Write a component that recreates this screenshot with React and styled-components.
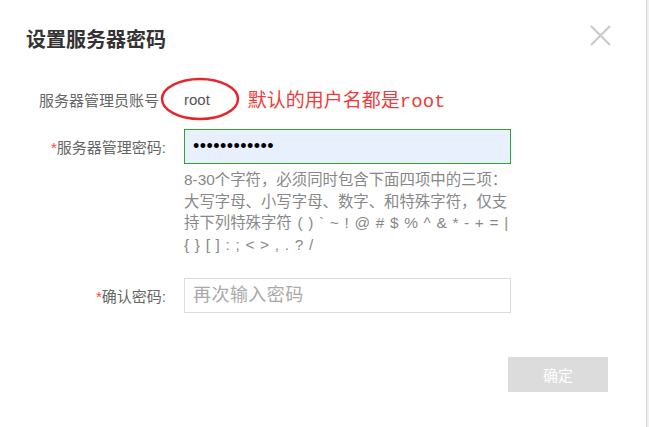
import React from 'react';
import styled, { createGlobalStyle } from 'styled-components';

const GlobalStyle = createGlobalStyle`
    html, body {
        margin: 0;
        padding: 0;
        background: #fff;
    }
    body {
        font-family: "Liberation Sans", "Noto Sans CJK SC", sans-serif;
    }
`

const Page = styled.div`
    display: flex;
    width: 649px;
    height: 427px;
    overflow: hidden;
`

const Dialog = styled.div`
    width: 646px;
    box-sizing: border-box;
    padding: 30px 38px 0 0;
    background: #fff;
`

const EdgeStrip = styled.div`
    width: 2px;
    border-left: 1px solid #d6d6d6;
    background: #f1f1f1;
`

const Header = styled.div`
    display: flex;
    justify-content: space-between;
    align-items: flex-start;
    padding-left: 26px;
    margin-right: -3px;
    margin-bottom: 29px;
`

const Title = styled.h2`
    margin: 0;
    font-size: 20px;
    line-height: 20px;
    font-weight: bold;
    color: #333;
`

const CloseButton = styled.button`
    margin-top: -5px;
    width: 21px;
    height: 21px;
    padding: 0;
    border: none;
    background: none;
    cursor: pointer;
    svg {
        display: block;
    }
`

const Row = styled.div`
    display: grid;
    grid-template-columns: 166px 327px;
    column-gap: 18px;
    align-items: center;
    margin-top: ${p => p.$mt || 0}px;
    min-height: ${p => p.$h || 35}px;
`

const Label = styled.label`
    text-align: right;
    font-size: 15px;
    color: #666;
    white-space: nowrap;
    padding-right: ${p => p.$pr || 0}px;
`

const Star = styled.span`
    color: #f44;
`

const Value = styled.div`
    position: relative;
    display: flex;
    align-items: center;
    height: 100%;
    font-size: 15px;
    color: #555;
`

const Circle = styled.svg`
    position: absolute;
    left: -24px;
    top: 50%;
    transform: translateY(-50%);
`

const Note = styled.span`
    margin-left: 38px;
    font-family: "Liberation Mono", "Noto Sans CJK SC", monospace;
    font-size: 19px;
    color: #ee3b3b;
    white-space: nowrap;
`

const Input = styled.input`
    box-sizing: border-box;
    width: 327px;
    height: 35px;
    margin: 0;
    padding: 0 8px;
    outline: none;
    font-family: "Liberation Sans", "Noto Sans CJK SC", sans-serif;
    font-size: 15px;
    color: #333;
    border: 1px solid ${p => p.$ok ? '#2ea52e' : '#dcdcdc'};
    background: ${p => p.$ok ? '#e8f0fe' : '#fff'};
    &[type="password"] {
        font-size: 18px;
        letter-spacing: 0.45px;
        color: #000;
    }
    &::placeholder {
        color: #aaa;
    }
`

const Hint = styled.div`
    grid-column: 2;
    font-size: 15.4px;
    line-height: 21.5px;
    color: #888;
    word-spacing: 1.4px;
    white-space: nowrap;
`

const Footer = styled.div`
    display: flex;
    justify-content: flex-end;
    margin-top: 44px;
`

const SubmitButton = styled.button`
    width: 100px;
    height: 35px;
    border: none;
    background: #dcdcdc;
    color: #fff;
    font-family: "Liberation Sans", "Noto Sans CJK SC", sans-serif;
    font-size: 15px;
    cursor: default;
`

export default function App() {
    return (
        <Page>
            <GlobalStyle />
            <Dialog>
                <Header>
                    <Title>设置服务器密码</Title>
                    <CloseButton aria-label="关闭">
                        <svg width="21" height="21" viewBox="0 0 21 21">
                            <path d="M1 1 L20 20 M20 1 L1 20" stroke="#c9c9c9" strokeWidth="2" fill="none" />
                        </svg>
                    </CloseButton>
                </Header>

                <Row $h={40}>
                    <Label $pr={7}>服务器管理员账号</Label>
                    <Value>
                        <Circle width="80" height="44" viewBox="0 0 80 44">
                            <ellipse cx="40" cy="22" rx="38" ry="20" fill="none" stroke="#e8262a" strokeWidth="2.5" />
                        </Circle>
                        <span>root</span>
                        <Note>默认的用户名都是root</Note>
                    </Value>
                </Row>

                <Row $mt={10}>
                    <Label><Star>*</Star>服务器管理密码:</Label>
                    <Input type="password" value="abcdefghijkl" readOnly $ok />
                </Row>

                <Row $mt={5} $h={0}>
                    <Hint>
                        8-30个字符，必须同时包含下面四项中的三项：<br />
                        大写字母、小写字母、数字、和特殊字符，仅支<br />
                        持下列特殊字符 ( ) ` ~ ! @ # $ % ^ &amp; * - + = |<br />
                        {'{ } [ ] : ; < > , . ? /'}
                    </Hint>
                </Row>

                <Row $mt={23}>
                    <Label><Star>*</Star>确认密码:</Label>
                    <Input type="password" placeholder="再次输入密码" />
                </Row>

                <Footer>
                    <SubmitButton>确定</SubmitButton>
                </Footer>
            </Dialog>
            <EdgeStrip />
        </Page>
    );
}
